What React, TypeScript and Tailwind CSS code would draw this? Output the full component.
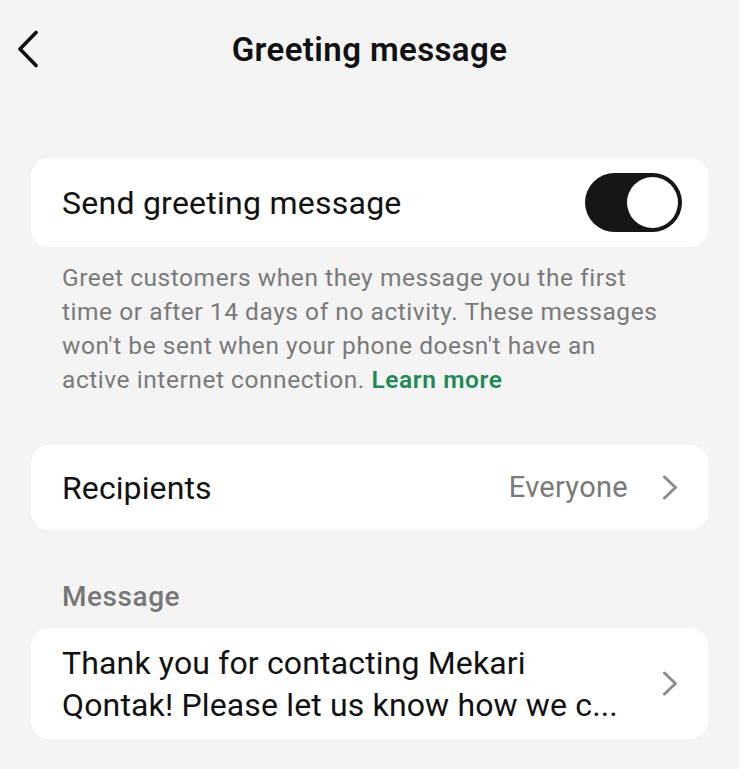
import React from "react";

function ChevronLeft() {
  return (
    <svg width="24" height="38" viewBox="0 0 24 38" fill="none">
      <path d="M20 2.5 L4 19 L20 35.5" stroke="#111" strokeWidth="3.6" strokeLinecap="round" strokeLinejoin="round" />
    </svg>
  );
}

function ChevronRight() {
  return (
    <svg width="16" height="25" viewBox="0 0 16 25" fill="none">
      <path d="M2.5 2 L13.5 12.5 L2.5 23" stroke="#8c8c8c" strokeWidth="3" strokeLinecap="round" strokeLinejoin="round" />
    </svg>
  );
}

function Toggle() {
  return (
    <div className="flex h-[59px] w-[97px] items-center justify-end rounded-full bg-[#161616] p-[4px]">
      <div className="h-[51px] w-[51px] rounded-full bg-white" />
    </div>
  );
}

export default function App() {
  return (
    <div
      className="min-h-[769px] w-[739px] bg-[#f4f4f4] text-[#111]"
      style={{ fontFamily: "Roboto, 'Liberation Sans', sans-serif" }}
    >
      {/* header */}
      <div className="relative flex h-[100px] items-center justify-center">
        <div className="absolute left-[16px] top-[30px]">
          <ChevronLeft />
        </div>
        <h1 className="text-[33px] font-semibold tracking-[0.4px]">Greeting message</h1>
      </div>

      <div className="px-[31px] pt-[58px]">
        {/* toggle card */}
        <div className="flex h-[89px] items-center justify-between rounded-[18px] bg-white pl-[31px] pr-[26px]">
          <span className="text-[32px] tracking-[0.25px]">Send greeting message</span>
          <Toggle />
        </div>

        <p className="px-[31px] pt-[14px] text-[24.5px] leading-[34px] tracking-[0.55px] text-[#7a7a7a]">
          Greet customers when they message you the first
          <br />
          time or after 14 days of no activity. These messages
          <br />
          won't be sent when your phone doesn't have an
          <br />
          active internet connection.{" "}
          <span className="font-semibold tracking-[0.6px] text-[#1f8a57]">Learn more</span>
        </p>

        {/* recipients */}
        <div className="mt-[48px] flex h-[85px] items-center rounded-[18px] bg-white pl-[31px] pr-[30px]">
          <span className="flex-1 text-[32px] tracking-[0.1px]">Recipients</span>
          <span className="mr-[34px] text-[29px] tracking-[0.3px] text-[#7a7a7a]">Everyone</span>
          <ChevronRight />
        </div>

        <div className="px-[31px] pt-[46px] pb-[10px] text-[28px] font-medium tracking-[0.55px] text-[#777]">Message</div>

        {/* message preview */}
        <div className="flex h-[111px] items-center rounded-[18px] bg-white pl-[31px] pr-[30px]">
          <p className="flex-1 text-[32px] leading-[42px] tracking-[0.15px]">
            Thank you for contacting Mekari
            <br />
            Qontak! Please let us know how we c...
          </p>
          <ChevronRight />
        </div>
      </div>
    </div>
  );
}
